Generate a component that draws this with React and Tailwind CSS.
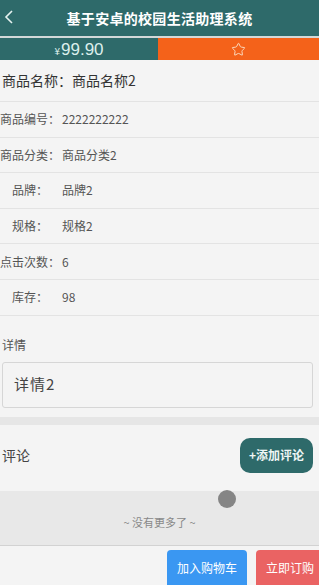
import { Star } from 'lucide-react';

const rows = [
  { label: '商品编号：', value: '2222222222' },
  { label: '商品分类：', value: '商品分类2' },
  { label: '品牌：', value: '品牌2' },
  { label: '规格：', value: '规格2' },
  { label: '点击次数：', value: '6' },
  { label: '库存：', value: '98' },
];

export default function App() {
  return (
    <div
      className="relative w-[319px] h-[585px] overflow-hidden bg-[#f4f4f4]"
      style={{ fontFamily: '"Noto Sans CJK SC", "Liberation Sans", sans-serif' }}
    >
      {/* Top bar */}
      <header className="relative flex h-[36px] items-center justify-center bg-[#2e6a6a]">
        <svg
          className="absolute left-[3px] top-[9px]"
          width="12"
          height="16"
          viewBox="0 0 12 16"
          fill="none"
          stroke="#e6f2f0"
          strokeWidth="1.6"
        >
          <polyline points="9,2 3,8 9,14" />
        </svg>
        <h1 className="text-[14px] font-bold text-white tracking-[0.3px]">基于安卓的校园生活助理系统</h1>
      </header>
      <div className="h-[2px] bg-[#d3d8d8]" />

      {/* Price + favourite */}
      <div className="flex h-[22px]">
        <div className="flex w-[158px] items-center justify-center bg-[#2e6a6a] text-[#dcefec]">
          <span className="text-[10px] mr-[1px] mt-[2px]">¥</span>
          <span className="text-[17px] leading-none" style={{ fontFamily: '"Liberation Sans", sans-serif' }}>99.90</span>
        </div>
        <div className="flex flex-1 items-center justify-center bg-[#f4621a] pr-[1px]">
          <Star size={15} strokeWidth={1.6} color="#fbd9bd" />
        </div>
      </div>

      {/* Name */}
      <div className="flex h-[42px] items-center border-b border-[#e3e3e3] pl-[2px] text-[14px] text-[#333]">
        商品名称：商品名称2
      </div>

      {/* Attribute rows */}
      {rows.map((r) => (
        <div
          key={r.label}
          className="flex h-[35.6px] items-center border-b border-[#e3e3e3] text-[12px] text-[#555]"
        >
          <div className="flex w-[60px] shrink-0 justify-center whitespace-nowrap">{r.label}</div>
          <div className="ml-[2px]">{r.value}</div>
        </div>
      ))}

      {/* Details */}
      <div className="pt-[20px] pl-[2px] text-[12px] text-[#555]">详情</div>
      <div className="ml-[2px] mr-[6px] mt-[8px] flex h-[46px] items-center rounded-[3px] border border-[#d6d6d6] pl-[11px] text-[15px] tracking-[1px] text-[#444]">
        详情2
      </div>
      <div className="mt-[9px] h-[8px] bg-[#e6e6e6]" />

      {/* Comments */}
      <div className="flex h-[66px] items-start justify-between pl-[2px] pr-[6px] pt-[13px]">
        <span className="mt-[7px] text-[14px] text-[#444]">评论</span>
        <button className="h-[35px] w-[73px] rounded-[10px] bg-[#2e6a6a] text-[12px] font-bold text-[#eef6f5]">
          +添加评论
        </button>
      </div>

      <div className="flex h-[55px] items-end justify-center border-b border-[#d2d2d2] bg-[#e8e8e8] pb-[14px] text-[11px] text-[#888]">
        ~ 没有更多了 ~
      </div>

      {/* Bottom actions */}
      <div className="flex h-[40px] justify-end gap-[9px] pt-[4px] -mr-[5px]">
        <button className="h-[36px] rounded-t-[4px] bg-[#3a97f2] px-[10px] text-[12px] text-white">加入购物车</button>
        <button className="h-[36px] rounded-t-[4px] bg-[#ea6363] px-[10px] text-[12px] text-white">立即订购</button>
      </div>

      {/* floating loading dot */}
      <div className="absolute left-[218px] top-[490px] h-[18px] w-[18px] rounded-full bg-[#858585] blur-[0.5px]" />
    </div>
  );
}
